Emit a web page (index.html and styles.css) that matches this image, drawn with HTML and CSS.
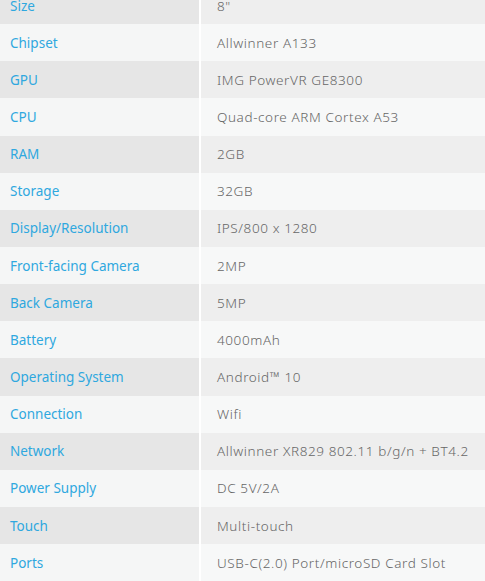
FILE: index.html
```html
<!DOCTYPE html>
<html>
<head>
<meta charset="utf-8">
<link rel="stylesheet" href="styles.css">
</head>
<body>
<div class="specs">
  <div class="row dark"><div class="k">Size</div><div class="v">8"</div></div>
  <div class="row light"><div class="k">Chipset</div><div class="v">Allwinner A133</div></div>
  <div class="row dark"><div class="k">GPU</div><div class="v">IMG PowerVR GE8300</div></div>
  <div class="row light"><div class="k">CPU</div><div class="v">Quad-core ARM Cortex A53</div></div>
  <div class="row dark"><div class="k">RAM</div><div class="v">2GB</div></div>
  <div class="row light"><div class="k">Storage</div><div class="v">32GB</div></div>
  <div class="row dark"><div class="k">Display/Resolution</div><div class="v">IPS/800 x 1280</div></div>
  <div class="row light"><div class="k">Front-facing Camera</div><div class="v">2MP</div></div>
  <div class="row dark"><div class="k">Back Camera</div><div class="v">5MP</div></div>
  <div class="row light"><div class="k">Battery</div><div class="v">4000mAh</div></div>
  <div class="row dark"><div class="k">Operating System</div><div class="v">Android™ 10</div></div>
  <div class="row light"><div class="k">Connection</div><div class="v">Wifi</div></div>
  <div class="row dark"><div class="k">Network</div><div class="v">Allwinner XR829 802.11 b/g/n + BT4.2</div></div>
  <div class="row light"><div class="k">Power Supply</div><div class="v">DC 5V/2A</div></div>
  <div class="row dark"><div class="k">Touch</div><div class="v">Multi-touch</div></div>
  <div class="row light"><div class="k">Ports</div><div class="v">USB-C(2.0) Port/microSD Card Slot</div></div>
</div>
</body>
</html>
```
FILE: styles.css
```css
html, body {
  margin: 0;
  padding: 0;
  background: #ffffff;
}
.specs {
  margin-top: -13px;
  display: flex;
  flex-direction: column;
}
.row {
  display: flex;
  height: 37.15px;
  gap: 2px;
}
.k, .v {
  display: flex;
  align-items: center;
}
.k {
  width: 199px;
  flex: none;
  padding-left: 10px;
  box-sizing: border-box;
  font-family: "Noto Sans", sans-serif;
  font-size: 13.5px;
  color: #2fa8df;
}
.v {
  flex: 1;
  padding-left: 16px;
  font-family: "Noto Sans", sans-serif;
  font-size: 13.5px;
  font-weight: 300;
  letter-spacing: 0.6px;
  color: #666666;
}
.dark .k { background: #e6e6e6; }
.dark .v { background: #eeeeee; }
.light .k { background: #f5f6f6; }
.light .v { background: #f7f8f8; }
```
